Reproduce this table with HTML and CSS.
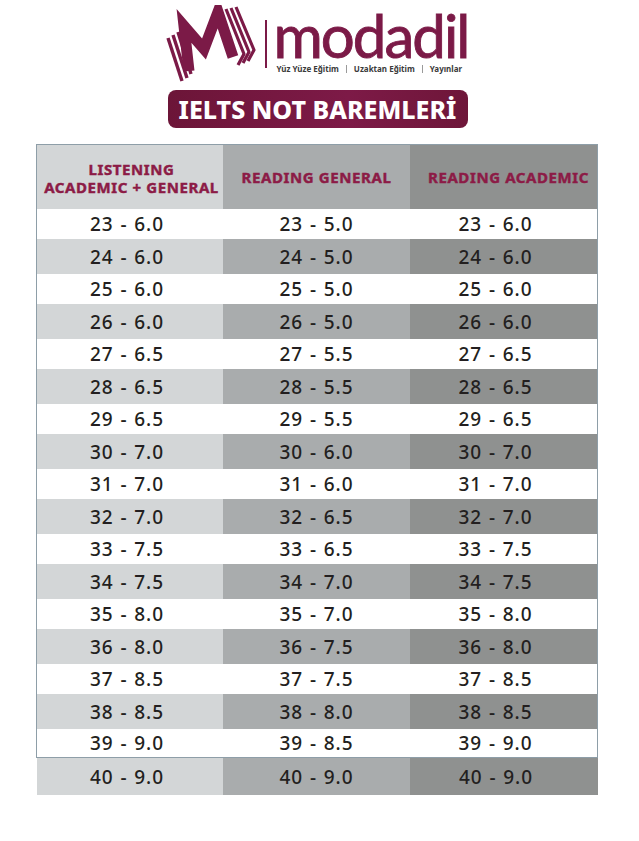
FILE: index.html
```html
<!DOCTYPE html>
<html lang="tr">
<head>
<meta charset="utf-8">
<title>IELTS Not Baremleri</title>
<link rel="stylesheet" href="styles.css">
</head>
<body>
<header class="brand">
  <svg class="brand-icon" viewBox="0 0 92 80" width="92" height="80" aria-hidden="true">
    <g fill="none" stroke="#7b1a47" stroke-linecap="butt">
      <path d="M3 33 L17 76" stroke-width="3.4"/>
      <path d="M8 30 L22 73" stroke-width="3.4"/>
      <path d="M13 27 L26 69" stroke-width="3.4"/>
      <path d="M61 4 L79 49 L73 60" stroke-width="3.2" stroke-linejoin="round"/>
      <path d="M66 3 L84 47 L78 58" stroke-width="3.2" stroke-linejoin="round"/>
      <path d="M71 2 L89 45 L83 56" stroke-width="3.2" stroke-linejoin="round"/>
      <path d="M24 66 L19 21 L39 44 L53 7 L68 52" stroke-width="11" stroke-linejoin="miter" stroke-miterlimit="6"/>
    </g>
  </svg>
  <div class="brand-rule"></div>
  <div class="brand-text">
    <div class="brand-name">modadil</div>
    <div class="brand-sub">
      <span>Yüz Yüze Eğitim</span><i></i><span>Uzaktan Eğitim</span><i></i><span>Yayınlar</span>
    </div>
  </div>
</header>

<div class="title-wrap"><h1 class="title">IELTS NOT BAREMLERİ</h1></div>

<section class="table">
  <div class="box">
    <div class="row head">
      <div class="c c1">LISTENING<br>ACADEMIC + GENERAL</div>
      <div class="c c2">READING GENERAL</div>
      <div class="c c3">READING ACADEMIC</div>
    </div>
    <div class="row w"><div class="c c1">23 - 6.0</div><div class="c c2">23 - 5.0</div><div class="c c3">23 - 6.0</div></div>
    <div class="row g"><div class="c c1">24 - 6.0</div><div class="c c2">24 - 5.0</div><div class="c c3">24 - 6.0</div></div>
    <div class="row w"><div class="c c1">25 - 6.0</div><div class="c c2">25 - 5.0</div><div class="c c3">25 - 6.0</div></div>
    <div class="row g"><div class="c c1">26 - 6.0</div><div class="c c2">26 - 5.0</div><div class="c c3">26 - 6.0</div></div>
    <div class="row w"><div class="c c1">27 - 6.5</div><div class="c c2">27 - 5.5</div><div class="c c3">27 - 6.5</div></div>
    <div class="row g"><div class="c c1">28 - 6.5</div><div class="c c2">28 - 5.5</div><div class="c c3">28 - 6.5</div></div>
    <div class="row w"><div class="c c1">29 - 6.5</div><div class="c c2">29 - 5.5</div><div class="c c3">29 - 6.5</div></div>
    <div class="row g"><div class="c c1">30 - 7.0</div><div class="c c2">30 - 6.0</div><div class="c c3">30 - 7.0</div></div>
    <div class="row w"><div class="c c1">31 - 7.0</div><div class="c c2">31 - 6.0</div><div class="c c3">31 - 7.0</div></div>
    <div class="row g"><div class="c c1">32 - 7.0</div><div class="c c2">32 - 6.5</div><div class="c c3">32 - 7.0</div></div>
    <div class="row w"><div class="c c1">33 - 7.5</div><div class="c c2">33 - 6.5</div><div class="c c3">33 - 7.5</div></div>
    <div class="row g"><div class="c c1">34 - 7.5</div><div class="c c2">34 - 7.0</div><div class="c c3">34 - 7.5</div></div>
    <div class="row w"><div class="c c1">35 - 8.0</div><div class="c c2">35 - 7.0</div><div class="c c3">35 - 8.0</div></div>
    <div class="row g"><div class="c c1">36 - 8.0</div><div class="c c2">36 - 7.5</div><div class="c c3">36 - 8.0</div></div>
    <div class="row w"><div class="c c1">37 - 8.5</div><div class="c c2">37 - 7.5</div><div class="c c3">37 - 8.5</div></div>
    <div class="row g"><div class="c c1">38 - 8.5</div><div class="c c2">38 - 8.0</div><div class="c c3">38 - 8.5</div></div>
    <div class="row w last"><div class="c c1">39 - 9.0</div><div class="c c2">39 - 8.5</div><div class="c c3">39 - 9.0</div></div>
  </div>
  <div class="row g final"><div class="c c1">40 - 9.0</div><div class="c c2">40 - 9.0</div><div class="c c3">40 - 9.0</div></div>
</section>
</body>
</html>
```

FILE: styles.css
```css
* { box-sizing: border-box; }
html, body { margin: 0; padding: 0; background: #ffffff; }
body {
  width: 639px;
  font-family: "Noto Sans", "DejaVu Sans", sans-serif;
  color: #231f20;
}

/* Brand header */
.brand {
  display: flex;
  align-items: flex-start;
  padding: 5px 0 0 165px;
  height: 85px;
}
.brand-icon { display: block; flex: 0 0 auto; }
.brand-rule {
  width: 1.5px;
  height: 48px;
  background: #7b1a47;
  margin: 15px 9px 0 8px;
}
.brand-text { display: flex; flex-direction: column; }
.brand-name {
  font-family: "Lato", "Noto Sans", sans-serif;
  font-weight: 400;
  font-size: 60px;
  line-height: 50px;
  height: 50px;
  letter-spacing: -2px;
  color: #7b1a47;
  margin-top: 5px;
  margin-left: -2px;
  -webkit-text-stroke: 0.9px #7b1a47;
}
.brand-sub {
  display: flex;
  align-items: center;
  gap: 7px;
  font-family: "Noto Sans", sans-serif;
  font-weight: 700;
  font-size: 8px;
  line-height: 10px;
  color: #3a3a3a;
  margin-top: 4px;
  padding-left: 1px;
}
.brand-sub i {
  display: block;
  width: 1px;
  height: 8px;
  background: #9a9a9a;
}

/* Title badge */
.title-wrap { display: flex; justify-content: center; }
.title {
  margin: 5px 0 0 -4px;
  width: 300px;
  height: 38px;
  border-radius: 8px;
  background: linear-gradient(90deg, #6c1538 0%, #7d1a47 60%, #6e1639 100%);
  color: #ffffff;
  font-family: "Noto Sans", sans-serif;
  font-weight: 800;
  font-size: 25px;
  line-height: 38px;
  text-align: center;
}

/* Table */
.table {
  margin: 16px 0 0 36px;
  width: 562px;
}
.box {
  border: 1px solid #8e9ea8;
}
.row {
  display: grid;
  grid-template-columns: 186px 187px 187px;
}
.c {
  display: flex;
  align-items: center;
  justify-content: center;
  text-align: center;
  white-space: nowrap;
  font-family: "Noto Sans", sans-serif;
  font-weight: 500;
  font-size: 19px;
  letter-spacing: 0.9px;
  word-spacing: 1px;
  color: #231f20;
}
.row.w { height: 30px; background: #ffffff; }
.row.g { height: 35px; }
.row.g .c1, .head .c1 { background: #d3d6d7; }
.row.g .c2, .head .c2 { background: #a9acad; }
.row.g .c3, .head .c3 { background: #8f9190; }
.c1 { padding-right: 6px; }
.c3 { padding-right: 16px; }

.head { height: 64px; }
.head .c {
  font-weight: 700;
  font-size: 15px;
  line-height: 18px;
  letter-spacing: 0.6px;
  word-spacing: 0;
  color: #8c1b46;
  -webkit-text-stroke: 0.45px #8c1b46;
}
.head .c1 { padding: 1px 0 0 3px; }
.head .c3 { padding: 0 0 0 10px; }

.row.final { height: 37px; }
.row.w.last { height: 28px; }
.final { padding-left: 1px; grid-template-columns: 186px 187px 188px; }
```
